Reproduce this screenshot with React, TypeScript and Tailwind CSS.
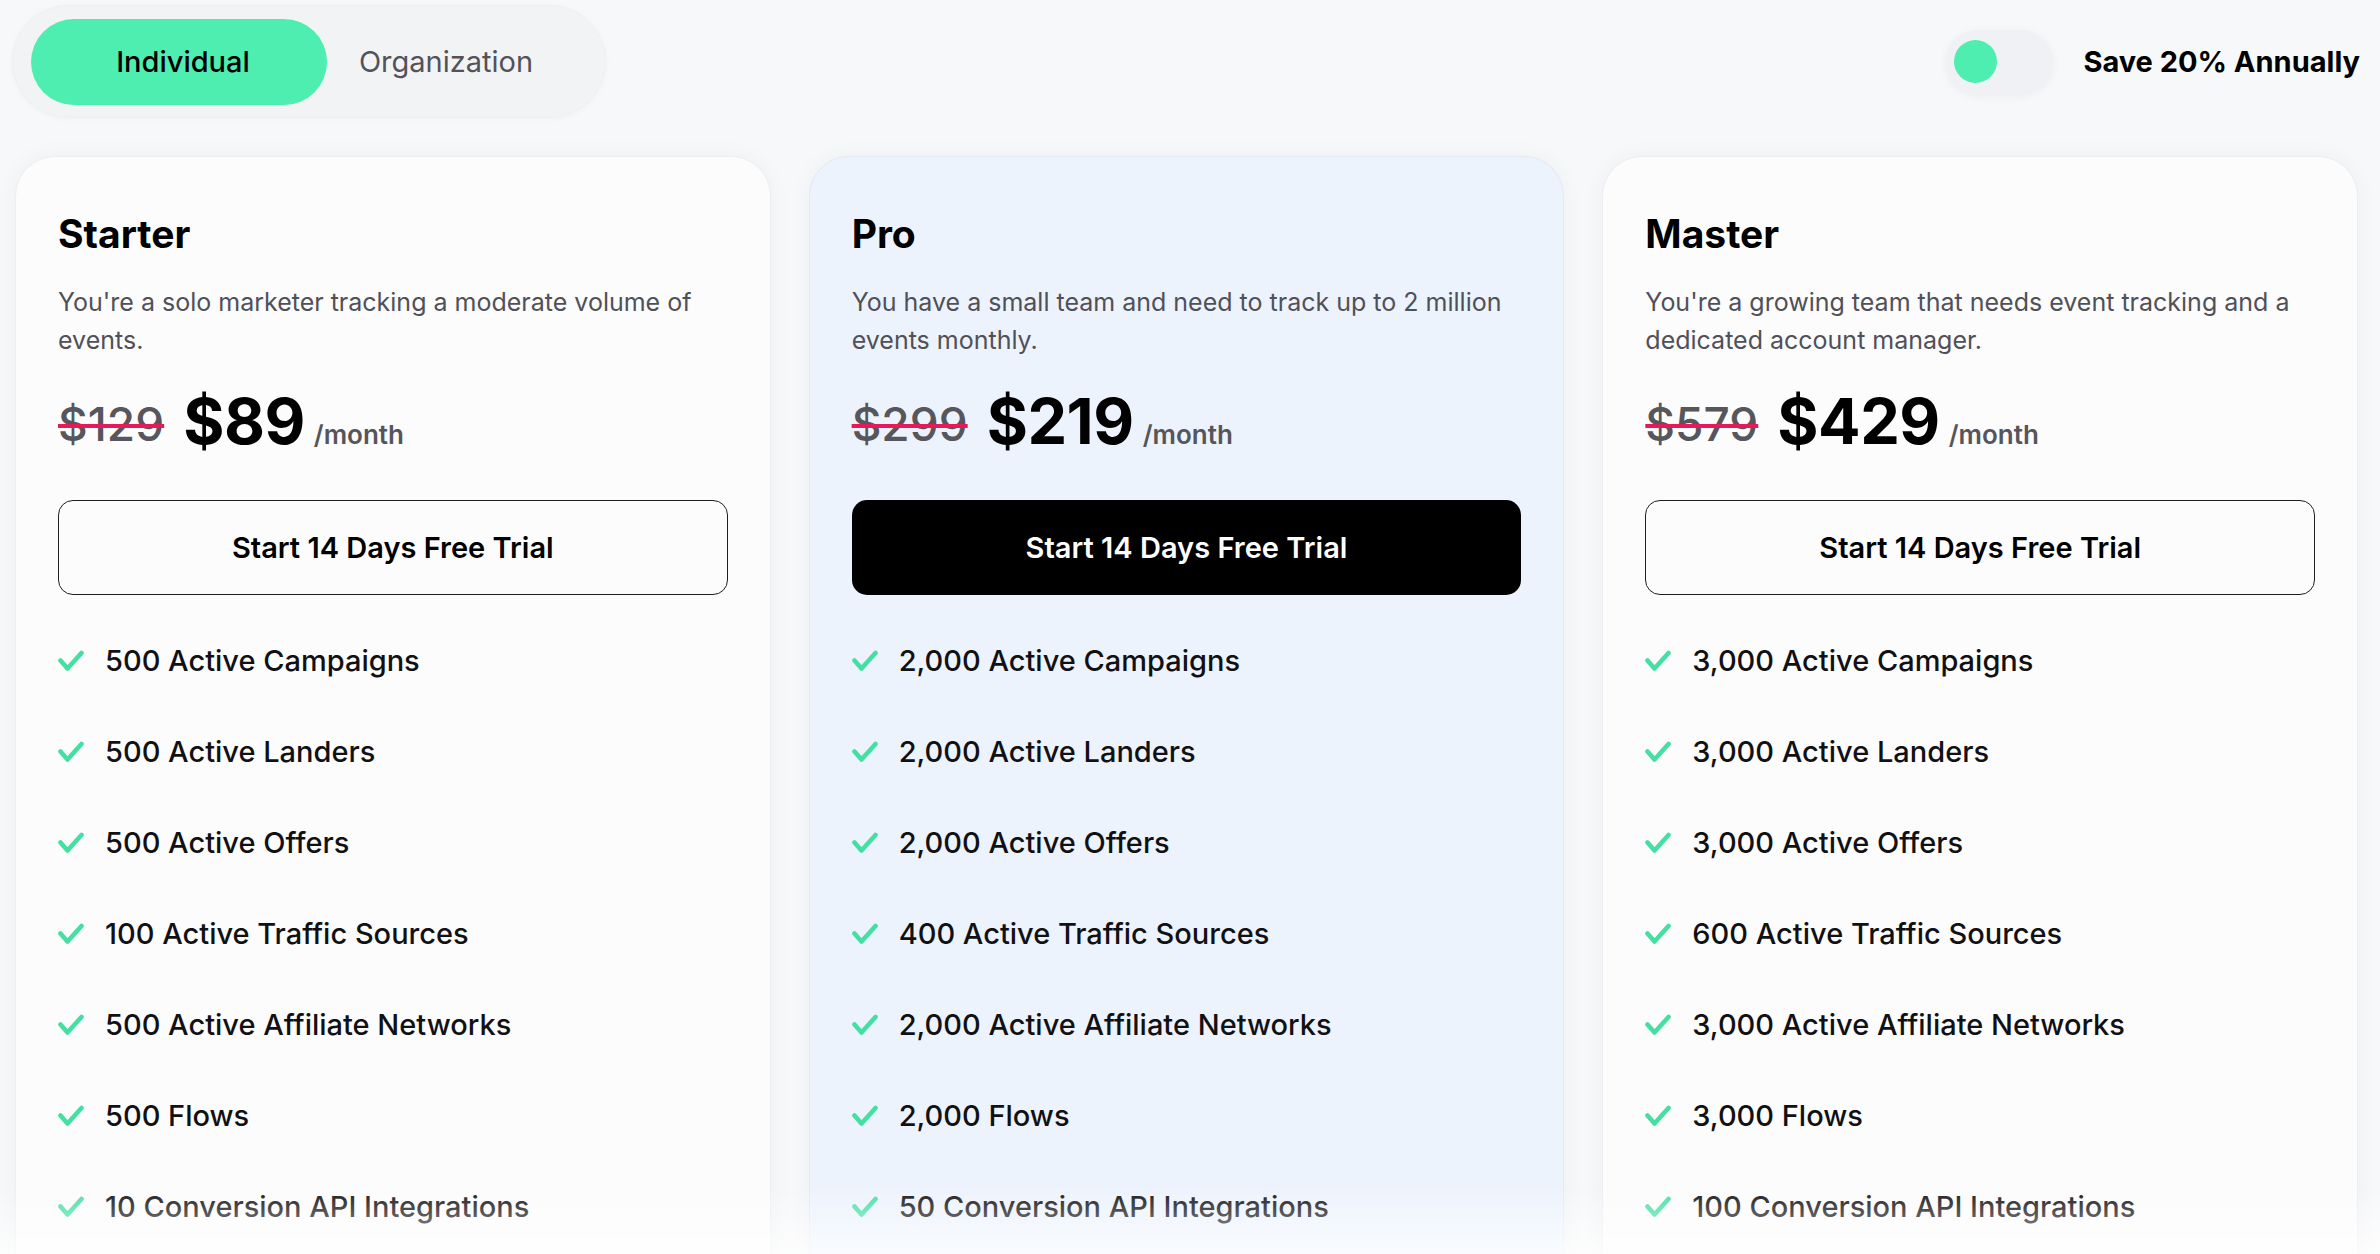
import { useState } from "react";

type Plan = {
  name: string;
  blurb: string;
  was: string;
  now: string;
  featured?: boolean;
  features: string[];
};

const plans: Plan[] = [
  {
    name: "Starter",
    blurb: "You're a solo marketer tracking a moderate volume of events.",
    was: "$129",
    now: "$89",
    features: [
      "500 Active Campaigns",
      "500 Active Landers",
      "500 Active Offers",
      "100 Active Traffic Sources",
      "500 Active Affiliate Networks",
      "500 Flows",
      "10 Conversion API Integrations",
    ],
  },
  {
    name: "Pro",
    blurb: "You have a small team and need to track up to 2 million events monthly.",
    was: "$299",
    now: "$219",
    featured: true,
    features: [
      "2,000 Active Campaigns",
      "2,000 Active Landers",
      "2,000 Active Offers",
      "400 Active Traffic Sources",
      "2,000 Active Affiliate Networks",
      "2,000 Flows",
      "50 Conversion API Integrations",
    ],
  },
  {
    name: "Master",
    blurb: "You're a growing team that needs event tracking and a dedicated account manager.",
    was: "$579",
    now: "$429",
    features: [
      "3,000 Active Campaigns",
      "3,000 Active Landers",
      "3,000 Active Offers",
      "600 Active Traffic Sources",
      "3,000 Active Affiliate Networks",
      "3,000 Flows",
      "100 Conversion API Integrations",
    ],
  },
];

function Check() {
  return (
    <svg width="26" height="22" viewBox="0 0 26 22" fill="none" className="shrink-0">
      <path
        d="M2.5 10.5 L9.5 18.5 L23.5 3"
        stroke="#45dfa4"
        strokeWidth="4.6"
        strokeLinecap="round"
        strokeLinejoin="round"
      />
    </svg>
  );
}

function PlanCard({ plan }: { plan: Plan }) {
  const cardClass = plan.featured
    ? "rounded-[40px] border border-[#e4e9f3] bg-[#edf3fd] shadow-[0_0_24px_rgba(15,23,42,0.04)] px-[42px] pt-[54px] pb-[80px]"
    : "rounded-[40px] border border-[#eceef2] bg-[#fcfcfd] shadow-[0_0_24px_rgba(15,23,42,0.04)] px-[42px] pt-[54px] pb-[80px]";
  const buttonClass = plan.featured
    ? "mt-[47px] flex h-[95px] w-full items-center justify-center rounded-[15px] bg-black text-[29px] font-semibold text-white"
    : "mt-[47px] flex h-[95px] w-full items-center justify-center rounded-[15px] border-[1.5px] border-[#1f1f1f] text-[29px] font-semibold text-black";

  return (
    <div className={cardClass}>
      <h2 className="text-[39px] font-bold leading-[1.2] text-black">{plan.name}</h2>
      <p className="mt-[25px] text-[25px] leading-[38px] text-[#505058]">{plan.blurb}</p>

      <div className="mt-[31px] flex items-end">
        <span className="mb-[6px] text-[46px] font-medium leading-none text-[#56565c] line-through decoration-[#e8195b] decoration-4">
          {plan.was}
        </span>
        <span className="ml-[19px] text-[63px] font-bold leading-none tracking-[-0.5px] text-black">
          {plan.now}
        </span>
        <span className="mb-[5px] ml-[9px] text-[26px] font-semibold leading-none text-[#55555b]">
          /month
        </span>
      </div>

      <button type="button" className={buttonClass}>
        Start 14 Days Free Trial
      </button>

      <ul className="mt-[46px] flex flex-col gap-[51px]">
        {plan.features.map((f) => (
          <li key={f} className="flex h-[40px] items-center gap-[21px]">
            <Check />
            <span className="text-[29px] font-medium text-[#111114]">{f}</span>
          </li>
        ))}
      </ul>
    </div>
  );
}

export default function App() {
  const [tab, setTab] = useState<"individual" | "organization">("individual");
  const [annual, setAnnual] = useState(false);

  return (
    <div className="relative min-h-screen overflow-hidden bg-[#f7f8fa] font-['Inter','Noto_Sans',sans-serif]">
      <header className="flex h-[113px] items-center justify-between pl-[12px] pr-[20px] mt-[5px]">
        <div className="flex h-[113px] items-center rounded-full border border-[#eef0f3] bg-[#f2f3f5] pl-[18px] pr-[40px] shadow-[0_1px_6px_rgba(0,0,0,0.03)]">
          <button
            type="button"
            onClick={() => setTab("individual")}
            className={
              tab === "individual"
                ? "flex h-[86px] w-[296px] items-center justify-center rounded-full bg-[#4eeeb0] pl-[8px] text-[29px] font-medium text-black"
                : "flex h-[86px] w-[296px] items-center justify-center rounded-full pl-[8px] text-[29px] text-[#52525b]"
            }
          >
            Individual
          </button>
          <button
            type="button"
            onClick={() => setTab("organization")}
            className={
              tab === "organization"
                ? "flex h-[86px] w-[238px] items-center justify-center rounded-full bg-[#4eeeb0] text-[29px] font-medium text-black"
                : "flex h-[86px] w-[238px] items-center justify-center rounded-full text-[29px] text-[#52525b]"
            }
          >
            Organization
          </button>
        </div>

        <div className="flex items-center gap-[30px]">
          <button
            type="button"
            onClick={() => setAnnual(!annual)}
            className={
              annual
                ? "flex h-[64px] w-[107px] items-center justify-end rounded-full bg-[#eff1f4] pr-[8px] shadow-[0_2px_10px_rgba(0,0,0,0.05)]"
                : "flex h-[64px] w-[107px] items-center justify-start rounded-full bg-[#eff1f4] pl-[8px] shadow-[0_2px_10px_rgba(0,0,0,0.05)]"
            }
          >
            <span className="block h-[43px] w-[43px] rounded-full bg-[#4eeeb0]" />
          </button>
          <span className="text-[29px] font-bold text-black">Save 20% Annually</span>
        </div>
      </header>

      <main className="mt-[38px] grid grid-cols-3 gap-[38px] pl-[15px] pr-[22px]">
        {plans.map((p) => (
          <PlanCard key={p.name} plan={p} />
        ))}
      </main>

      <div className="pointer-events-none fixed inset-x-0 bottom-0 h-[70px] bg-linear-to-t from-white/70 to-transparent" />
    </div>
  );
}
